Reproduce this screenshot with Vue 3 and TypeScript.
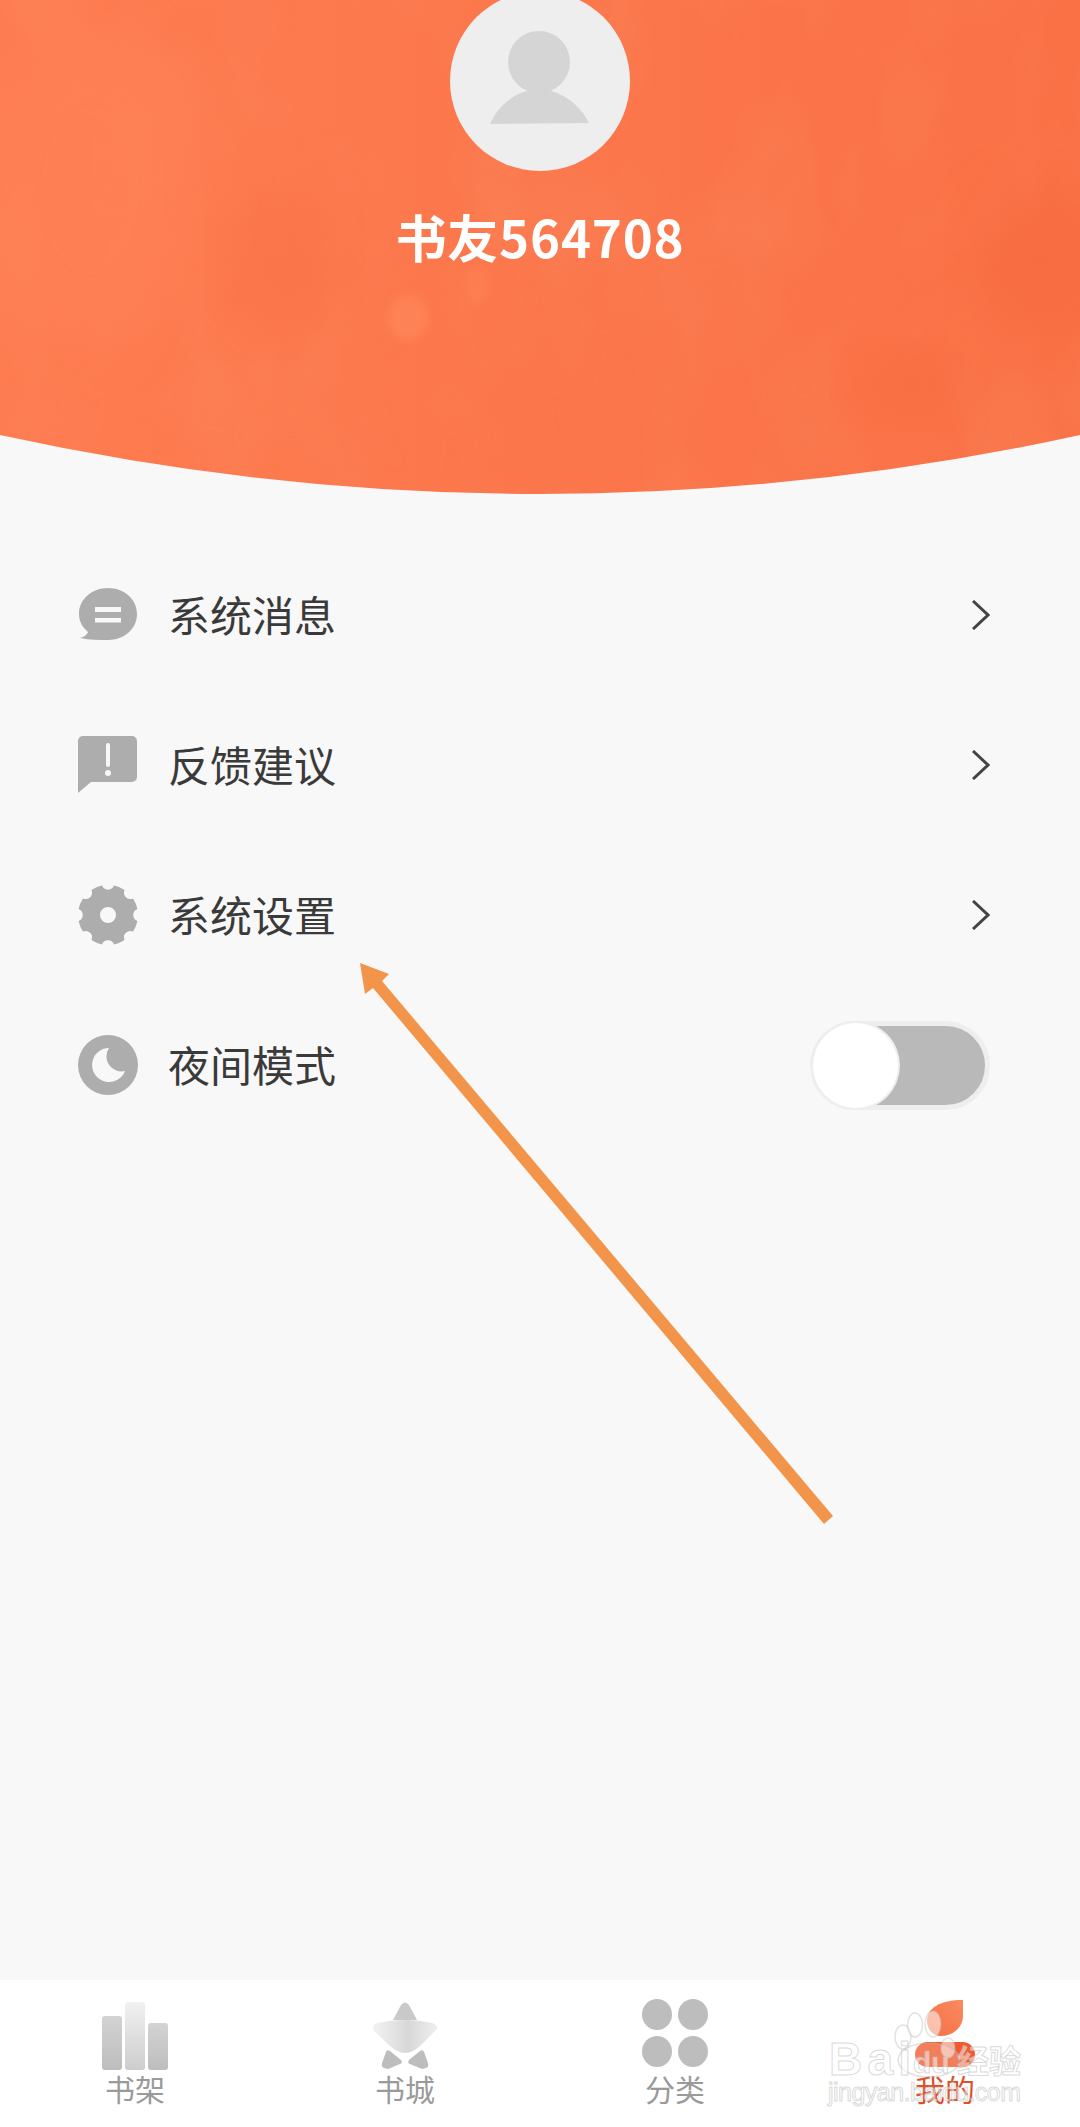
<script setup lang="ts">
interface MenuRow { label: string; icon: string; chevron: boolean }
const rows: MenuRow[] = [
  { label: '系统消息', icon: 'message', chevron: true },
  { label: '反馈建议', icon: 'feedback', chevron: true },
  { label: '系统设置', icon: 'gear', chevron: true },
  { label: '夜间模式', icon: 'moon', chevron: false },
]
const tabs = [
  { label: '书架', icon: 'shelf', active: false },
  { label: '书城', icon: 'star', active: false },
  { label: '分类', icon: 'dots', active: false },
  { label: '我的', icon: 'mine', active: true },
]
function gearPath(): string {
  const c = 30, r = 30, half = 11.5
  const pt = (deg: number) => {
    const a = (deg * Math.PI) / 180
    return `${(c + r * Math.cos(a)).toFixed(2)} ${(c + r * Math.sin(a)).toFixed(2)}`
  }
  let d = ''
  for (let i = 0; i < 8; i++) {
    const a = i * 45 - 90
    d += i === 0 ? `M${pt(a - half)}` : ''
    d += `A6.4 6.4 0 0 0 ${pt(a + half)}`
    d += `A${r} ${r} 0 0 1 ${pt(a + 45 - half)}`
  }
  return d + 'ZM38 30A8 8 0 1 0 22 30A8 8 0 1 0 38 30Z'
}
const gear = gearPath()
</script>

<template>
  <div class="page">
    <header class="hero">
      <svg class="hero-bg" viewBox="0 0 1080 495" width="1080" height="495">
        <defs>
          <linearGradient id="heroBase" x1="0" y1="0" x2="1" y2="0">
            <stop offset="0" stop-color="#fe7c51" />
            <stop offset="0.45" stop-color="#fc774c" />
            <stop offset="1" stop-color="#fa7146" />
          </linearGradient>
          <filter id="soft" x="-30%" y="-30%" width="160%" height="160%">
            <feGaussianBlur stdDeviation="28" />
          </filter>
          <filter id="softer" x="-30%" y="-30%" width="160%" height="160%">
            <feGaussianBlur stdDeviation="4" />
          </filter>
          <filter id="wash" x="0" y="0" width="100%" height="100%">
            <feTurbulence type="fractalNoise" baseFrequency="0.011 0.006" numOctaves="3" seed="7" />
            <feColorMatrix type="matrix" values="0 0 0 0 0.93  0 0 0 0 0.36  0 0 0 0 0.18  0 0 0 1.6 -0.62" />
          </filter>
          <clipPath id="heroClip">
            <path d="M0 0H1080V435Q540 553 0 435Z" />
          </clipPath>
        </defs>
        <g clip-path="url(#heroClip)">
          <rect width="1080" height="495" fill="url(#heroBase)" />
          <rect width="1080" height="495" filter="url(#wash)" opacity="0.2" />
          <ellipse cx="90" cy="190" rx="110" ry="150" fill="#ff8256" opacity="0.6" filter="url(#soft)" />
          <ellipse cx="285" cy="260" rx="50" ry="65" fill="#f76b40" opacity="0.4" filter="url(#soft)" />
          <ellipse cx="1040" cy="260" rx="60" ry="70" fill="#f76a3f" opacity="0.7" filter="url(#soft)" />
          <ellipse cx="910" cy="385" rx="50" ry="30" fill="#f76a3f" opacity="0.6" filter="url(#soft)" />
          <ellipse cx="408" cy="318" rx="20" ry="23" fill="#ff8a5c" opacity="0.6" filter="url(#softer)" />
          <ellipse cx="478" cy="285" rx="12" ry="20" fill="#ff8658" opacity="0.4" filter="url(#softer)" />
        </g>
      </svg>
      <div class="avatar">
        <svg viewBox="0 0 180 180" width="180" height="180">
          <circle cx="89" cy="71" r="31" fill="#d5d5d5" />
          <path d="M40 133C50 110 72 98 89 98C106 98 128 110 139 132Z" fill="#d5d5d5" />
        </svg>
      </div>
      <h1 class="name">书友564708</h1>
    </header>

    <ul class="menu">
      <li v-for="row in rows" :key="row.label" class="row">
        <svg class="row-icon" viewBox="0 0 60 60" width="60" height="60">
          <template v-if="row.icon === 'message'">
            <path d="M30 3C46 3 59 14 59 29C59 44 46 55 30 55C21 55 12 55 2 53C6 52 9 50 10 47C4 42 1 36 1 29C1 14 14 3 30 3Z" fill="#adadad" />
            <rect x="17" y="22" width="26" height="5" fill="#f8f8f8" />
            <rect x="17" y="33" width="26" height="4.5" fill="#f8f8f8" />
          </template>
          <template v-else-if="row.icon === 'feedback'">
            <path d="M6 1H54A5 5 0 0 1 59 6V42A5 5 0 0 1 54 47H13L0 58V6A5 5 0 0 1 6 1Z" fill="#adadad" />
            <rect x="28" y="8" width="4" height="24" rx="2" fill="#f8f8f8" />
            <circle cx="30" cy="38" r="3" fill="#f8f8f8" />
          </template>
          <path v-else-if="row.icon === 'gear'" :d="gear" fill="#adadad" fill-rule="evenodd" />
          <template v-else>
            <circle cx="30" cy="30" r="30" fill="#adadad" />
            <path d="M31 13A17 17 0 1 0 47 36A15 15 0 0 1 31 13Z" fill="#f8f8f8" />
          </template>
        </svg>
        <span class="row-label">{{ row.label }}</span>
        <svg v-if="row.chevron" class="chevron" viewBox="0 0 18 30" width="18" height="30">
          <path d="M1 1L16 15L1 29" fill="none" stroke="#444" stroke-width="3" />
        </svg>
        <div v-else class="switch"><span class="knob"></span></div>
      </li>
    </ul>

    <nav class="tabs">
      <div v-for="tab in tabs" :key="tab.label" class="tab" :class="{ active: tab.active }">
        <svg class="tab-icon" viewBox="0 0 70 70" width="70" height="70">
          <defs>
            <linearGradient id="barSide" x1="0" y1="0" x2="0" y2="1">
              <stop offset="0" stop-color="#d3d3d3" /><stop offset="1" stop-color="#bdbdbd" />
            </linearGradient>
            <linearGradient id="barMid" x1="0" y1="0" x2="0" y2="1">
              <stop offset="0" stop-color="#f1f1f1" /><stop offset="1" stop-color="#cdcdcd" />
            </linearGradient>
            <linearGradient id="lobe" x1="0" y1="0" x2="1" y2="0">
              <stop offset="0" stop-color="#f2f2f2" /><stop offset="0.55" stop-color="#d8d8d8" /><stop offset="1" stop-color="#eeeeee" />
            </linearGradient>
            <linearGradient id="leaf" x1="1" y1="0" x2="0" y2="1">
              <stop offset="0" stop-color="#fb8a5f" /><stop offset="1" stop-color="#f56f43" />
            </linearGradient>
          </defs>
          <template v-if="tab.icon === 'shelf'">
            <rect x="2" y="16" width="20" height="54" rx="3" fill="url(#barSide)" />
            <rect x="25" y="2" width="20" height="68" rx="3" fill="url(#barMid)" />
            <rect x="48" y="23" width="20" height="47" rx="3" fill="url(#barSide)" />
          </template>
          <template v-else-if="tab.icon === 'star'">
            <path d="M23 20L31 5Q35 0 39 5L47 20Z" fill="#c9c9c9" />
            <path d="M3 27Q3 24 8 23C25 19 45 19 62 23Q68 25 67 29L50 46Q35 60 20 46L4 31Z" fill="url(#lobe)" />
            <path d="M14 68Q11 67 12 63L16 52Q17 49 20 51L31 60Q33 63 30 64L18 69Z" fill="#bdbdbd" />
            <path d="M56 68Q59 67 58 63L54 52Q53 49 50 51L39 60Q37 63 40 64L52 69Z" fill="#bdbdbd" />
          </template>
          <g v-else-if="tab.icon === 'dots'" fill="#bdbdbd">
            <ellipse cx="17" cy="14.5" rx="15" ry="15.5" />
            <ellipse cx="53" cy="14.5" rx="15" ry="15.5" />
            <ellipse cx="17" cy="51.5" rx="15" ry="15.5" />
            <ellipse cx="53" cy="51.5" rx="15" ry="15.5" />
          </g>
          <template v-else>
            <path d="M53 0V16C53 28 42 36 31 36C22 36 17 28 17 21C17 8 30 0 53 0Z" fill="url(#leaf)" />
            <rect x="5" y="42" width="60" height="25" rx="12.5" fill="#f05a2e" />
          </template>
        </svg>
        <span class="tab-label">{{ tab.label }}</span>
      </div>
    </nav>

    <svg class="arrow" viewBox="0 0 500 580" width="500" height="580">
      <path d="M0 3L29 14L22 21L473 556L464 564L13 28L5 34Z" fill="#f2954b" />
    </svg>

    <svg class="watermark" viewBox="0 0 220 110" width="220" height="110">
      <g class="wm-paw">
        <ellipse cx="88" cy="27" rx="8" ry="12" />
        <ellipse cx="100" cy="15" rx="7.5" ry="12" />
        <ellipse cx="118" cy="14" rx="8" ry="13" />
        <ellipse cx="133" cy="38" rx="7" ry="10" />
        <ellipse class="palm" cx="114" cy="50" rx="31" ry="17" />
      </g>
      <text class="wm wm-latin" x="14" y="65" textLength="82">Bai</text>
      <text class="wm wm-du" x="98" y="63">du</text>
      <text class="wm wm-cjk" x="142" y="63">经验</text>
      <text class="wm wm-url" x="13" y="91" textLength="193">jingyan.baidu.com</text>
    </svg>
  </div>
</template>

<style scoped>
.page {
  position: relative;
  width: 1080px;
  height: 2127px;
  display: flex;
  flex-direction: column;
  overflow: hidden;
  background: #f8f8f8;
  font-family: "Noto Sans CJK SC", "Noto Sans", sans-serif;
}
.hero {
  position: relative;
  flex: none;
  height: 495px;
  display: flex;
  flex-direction: column;
  align-items: center;
}
.hero-bg {
  position: absolute;
  left: 0;
  top: 0;
}
.avatar {
  position: relative;
  width: 180px;
  height: 180px;
  margin-top: -9px;
  border-radius: 50%;
  background: #eeeeee;
}
.avatar svg {
  display: block;
}
.name {
  position: relative;
  margin: 35px 0 0;
  font-size: 51px;
  line-height: 60px;
  font-weight: 700;
  color: #ffffff;
  letter-spacing: 0.8px;
}
.menu {
  list-style: none;
  margin: 0;
  padding: 45px 0 0;
}
.row {
  height: 150px;
  padding: 0 90px 0 78px;
  display: flex;
  align-items: center;
}
.row-icon {
  flex: none;
  display: block;
}
.row-label {
  margin-left: 30px;
  font-size: 42px;
  line-height: 56px;
  color: #3a3a3a;
  position: relative;
  top: -1px;
}
.chevron {
  margin-left: auto;
  display: block;
}
.switch {
  position: relative;
  margin-left: auto;
  width: 180px;
  height: 89px;
  box-sizing: border-box;
  border: 5px solid #eeeeee;
  border-radius: 45px;
  background: #b9b9b9;
}
.knob {
  position: absolute;
  left: -2px;
  top: -3px;
  width: 85px;
  height: 85px;
  border-radius: 50%;
  background: #ffffff;
  box-shadow: 0 0 0 2px #eeeeee;
}
.tabs {
  margin-top: auto;
  height: 147px;
  box-sizing: border-box;
  padding-top: 20px;
  display: flex;
  background: #ffffff;
}
.tab {
  flex: 1;
  display: flex;
  flex-direction: column;
  align-items: center;
}
.tab-icon {
  display: block;
  overflow: visible;
}
.tab-label {
  margin-top: -2px;
  font-size: 30px;
  line-height: 40px;
  color: #9a9a9a;
}
.tab.active .tab-label {
  color: #dd5029;
}
.arrow {
  position: absolute;
  left: 360px;
  top: 960px;
}
.watermark {
  position: absolute;
  left: 815px;
  top: 2010px;
}
.wm-paw ellipse {
  fill: rgba(255, 255, 255, 0.55);
  stroke: rgba(185, 185, 185, 0.4);
  stroke-width: 1.5;
}
.wm-paw .palm {
  fill: rgba(255, 255, 255, 0.22);
}
.wm {
  fill: rgba(255, 255, 255, 0.5);
  stroke: rgba(185, 185, 185, 0.55);
  stroke-width: 1;
}
.wm-latin {
  font-family: "Liberation Sans", sans-serif;
  font-weight: 700;
  font-size: 46px;
}
.wm-du {
  font-family: "Liberation Sans", sans-serif;
  font-weight: 700;
  font-size: 30px;
}
.wm-cjk {
  font-family: "Noto Sans CJK SC", sans-serif;
  font-weight: 700;
  font-size: 32px;
}
.wm-url {
  font-family: "Liberation Sans", sans-serif;
  font-size: 25px;
}
</style>
